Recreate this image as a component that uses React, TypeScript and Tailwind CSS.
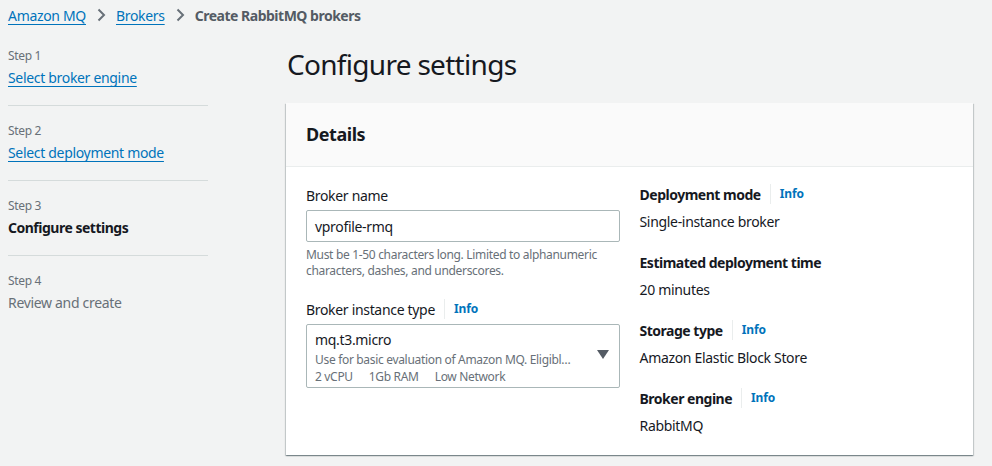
import React from "react";

const font = { fontFamily: '"Noto Sans", "Open Sans", sans-serif' };

function Chevron() {
  return (
    <svg width="16" height="16" viewBox="0 0 16 16" className="mx-[7px]">
      <path d="M5.5 2.5 L11 8 L5.5 13.5" fill="none" stroke="#687078" strokeWidth="2" />
    </svg>
  );
}

function Info() {
  return (
    <span className="flex items-center">
      <span className="mx-[9px] h-[20px] w-px bg-[#eaeded]" />
      <span className="text-[12px] font-bold text-[#0073bb] tracking-[-0.01em]">Info</span>
    </span>
  );
}

function Step({ n, title, kind, last }: { n: number; title: string; kind: "link" | "current" | "disabled"; last?: boolean }) {
  return (
    <div className={last ? "pt-[8px]" : "pt-[8px] pb-[17px] border-b border-[#d5dbdb]"}>
      <div className="text-[12px] leading-[16px] text-[#687078]">Step {n}</div>
      <div className="mt-[4px] text-[14px] leading-[20px]">
        {kind === "link" && <span className="text-[#0073bb] underline underline-offset-[3px]">{title}</span>}
        {kind === "current" && <span className="font-bold text-[#16191f] tracking-[-0.035em]">{title}</span>}
        {kind === "disabled" && <span className="text-[#687078]">{title}</span>}
      </div>
    </div>
  );
}

function KV({ label, value, info }: { label: string; value: string; info?: boolean }) {
  return (
    <div>
      <div className="flex items-center h-[20px]">
        <span className="text-[14px] font-bold text-[#16191f] tracking-[-0.035em]">{label}</span>
        {info && <Info />}
      </div>
      <div className="mt-[8px] text-[14px] leading-[20px] text-[#16191f]">{value}</div>
    </div>
  );
}

export default function App() {
  return (
    <div className="w-[992px] h-[466px] bg-[#f2f3f3] overflow-hidden tracking-[-0.02em]" style={font}>
      <div className="flex items-center pl-[8px] h-[30px] text-[14px]">
        <span className="text-[#0073bb] underline underline-offset-[3px]">Amazon MQ</span>
        <Chevron />
        <span className="text-[#0073bb] underline underline-offset-[3px]">Brokers</span>
        <Chevron />
        <span className="font-bold text-[#545b64] tracking-[-0.035em]">Create RabbitMQ brokers</span>
      </div>
      <div className="flex">
        <div className="w-[200px] ml-[8px] mt-[10px] flex flex-col gap-[9px]">
          <Step n={1} title="Select broker engine" kind="link" />
          <Step n={2} title="Select deployment mode" kind="link" />
          <Step n={3} title="Configure settings" kind="current" />
          <Step n={4} title="Review and create" kind="disabled" last />
        </div>
        <div className="ml-[78px] w-[687px]">
          <h1 className="text-[28px] leading-[36px] text-[#16191f] pl-[1px] mt-[16px] tracking-[-0.025em]">Configure settings</h1>
          <div className="mt-[21px] bg-white shadow-[0_1px_1px_0_rgba(0,28,36,0.3),1px_1px_1px_0_rgba(0,28,36,0.15),-1px_1px_1px_0_rgba(0,28,36,0.15)]">
            <div className="bg-[#fafafa] border-b border-[#eaeded] h-[64px] flex items-center px-[20px]">
              <span className="text-[18px] font-bold text-[#16191f] tracking-[-0.025em]">Details</span>
            </div>
            <div className="grid grid-cols-2 gap-[20px] px-[20px] pt-[19px] pb-[19px]">
              <div>
                <div className="text-[14px] leading-[20px] text-[#16191f]">Broker name</div>
                <div className="mt-[4px] h-[32px] border border-[#aab7b8] rounded-[2px] flex items-center px-[8px] text-[14px] text-[#16191f]">
                  vprofile-rmq
                </div>
                <div className="mt-[5px] text-[12px] leading-[16px] text-[#687078]">
                  Must be 1-50 characters long. Limited to alphanumeric characters, dashes, and underscores.
                </div>
                <div className="mt-[20px] flex items-center h-[20px]">
                  <span className="text-[14px] text-[#16191f]">Broker instance type</span>
                  <Info />
                </div>
                <div className="mt-[5px] h-[64px] border border-[#aab7b8] rounded-[2px] flex items-center pl-[8px] pr-[8px]">
                  <div className="flex-1 min-w-0 pr-[20px] pt-[4px]">
                    <div className="text-[14px] leading-[18px] text-[#16191f]">mq.t3.micro</div>
                    <div className="text-[12px] leading-[16px] text-[#687078] truncate mt-[3px]">
                      Use for basic evaluation of Amazon MQ. Eligible for free tier.
                    </div>
                    <div className="text-[12px] leading-[16px] text-[#687078] flex gap-[16px] mt-[1px]">
                      <span>2 vCPU</span>
                      <span>1Gb RAM</span>
                      <span>Low Network</span>
                    </div>
                  </div>
                  <svg width="12" height="10" viewBox="0 0 12 10" className="mr-[2px] -mt-[2px]">
                    <path d="M0 0 H12 L6 9 Z" fill="#545b64" />
                  </svg>
                </div>
              </div>
              <div className="flex flex-col gap-[20px] -mt-[2px]">
                <KV label="Deployment mode" value="Single-instance broker" info />
                <KV label="Estimated deployment time" value="20 minutes" />
                <KV label="Storage type" value="Amazon Elastic Block Store" info />
                <KV label="Broker engine" value="RabbitMQ" info />
              </div>
            </div>
          </div>
        </div>
      </div>
    </div>
  );
}
